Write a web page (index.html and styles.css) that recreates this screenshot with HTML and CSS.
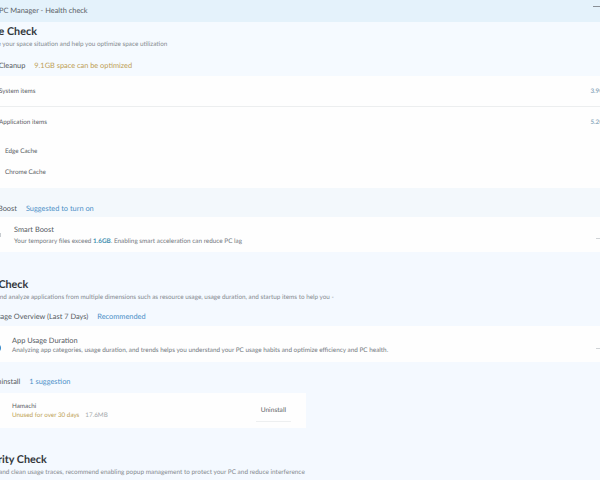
FILE: index.html
```html
<!DOCTYPE html>
<html lang="en">
<head>
<meta charset="utf-8">
<title>PC Manager - Health check</title>
<link rel="stylesheet" href="styles.css">
</head>
<body>
<div class="app">
  <header class="titlebar">
    <span class="app-name">PC Manager - Health check</span>
    <span class="minimize"></span>
  </header>

  <section class="top-block">
    <h2 class="title title-space">Space Check</h2>
    <p class="sub sub-space">Analyze your space situation and help you optimize space utilization</p>
    <div class="group-head head-cleanup"><span>Disk Cleanup</span><span class="warn">9.1GB space can be optimized</span></div>
  </section>

  <section class="panel">
    <div class="row row-system"><span>System items</span><b class="size">3.9GB</b></div>
    <div class="row row-app"><span>Application items</span><b class="size">5.2GB</b></div>
    <div class="cache cache-edge">Edge Cache</div>
    <div class="cache cache-chrome">Chrome Cache</div>
  </section>

  <div class="group-head band head-boost"><span>Smart Boost</span><span class="info">Suggested to turn on</span></div>
  <div class="card-wide boost-card">
    <span class="icon-stub"></span>
    <div>
      <div class="card-title">Smart Boost</div>
      <div class="card-text">Your temporary files exceed <b class="hl">1.6GB</b>. Enabling smart acceleration can reduce PC lag</div>
    </div>
    <span class="more"></span>
  </div>

  <section class="lower">
    <h2 class="title title-app">App Check</h2>
    <p class="sub sub-app">Detect and analyze applications from multiple dimensions such as resource usage, usage duration, and startup items to help you -</p>
    <div class="group-head head-usage"><span>App Usage Overview (Last 7 Days)</span><span class="info">Recommended</span></div>
    <div class="card-wide usage-card">
      <svg class="usage-icon" width="12" height="12" viewBox="0 0 12 12"><circle cx="6" cy="6" r="5" fill="#2f86c9"/></svg>
      <div>
        <div class="card-title">App Usage Duration</div>
        <div class="card-text usage-text">Analyzing app categories, usage duration, and trends helps you understand your PC usage habits and optimize efficiency and PC health.</div>
      </div>
      <span class="more"></span>
    </div>
    <div class="group-head head-uninstall"><span>Uninstall</span><span class="info">1 suggestion</span></div>
    <div class="app-card">
      <div class="app-info">
        <div class="app-title">Hamachi</div>
        <div class="app-meta"><span class="warn">Unused for over 30 days</span><span class="app-size">17.6MB</span></div>
      </div>
      <span class="uninstall">Uninstall</span>
    </div>
    <h2 class="title title-security">Security Check</h2>
    <p class="sub sub-security">Detect and clean usage traces, recommend enabling popup management to protect your PC and reduce interference</p>
  </section>
</div>
</body>
</html>
```
FILE: styles.css
```css
* { box-sizing: border-box; margin: 0; padding: 0; }
html, body { width: 600px; height: 480px; overflow: hidden; background: #f4f9ff; }
body { font-family: Lato, "Open Sans", sans-serif; color: #3a3f44; text-rendering: geometricPrecision; }
.app { width: 600px; height: 480px; overflow: hidden; }

.titlebar { height: 22px; background: #e4f2fb; display: flex; align-items: center; justify-content: space-between; }
.app-name { font-size: 7.4px; margin-left: -1px; color: #5a6066; margin-top: -1px; }
.minimize { width: 7px; height: 1px; background: #8a9096; margin-top: -9px; }

.top-block { height: 54px; background: #f5faff; display: flex; flex-direction: column; }
.title { font-size: 10.8px; font-weight: 700; color: #33373b; line-height: 14px; white-space: nowrap; }
.sub { font-size: 6.35px; color: #858a8f; line-height: 9px; white-space: nowrap; }
.title-space { margin: 3px 0 0 -24px; }
.sub-space { margin: 1px 0 0 -21px; }

.group-head { display: flex; gap: 9px; font-size: 7.4px; line-height: 11px; white-space: nowrap; color: #54595e; }
.warn { color: #bd9e55; }
.info { color: #4b8fc7; }
.head-cleanup { margin: 11px 0 0 -17.5px; }

.panel { height: 112px; background: #fefefe; display: flex; flex-direction: column; }
.row { display: flex; justify-content: space-between; font-size: 6.3px; line-height: 9px; color: #5b6065; white-space: nowrap; height: 31px; padding-top: 11px; margin-left: -1px; margin-right: -8px; }
.row-system { border-bottom: 1px solid #eceeef; }
.row-app { height: 29px; padding-top: 11px; }
.size { color: #8facc0; font-weight: 700; }
.cache { font-size: 6.3px; line-height: 9px; color: #5b6065; margin-left: 5px; }
.cache-edge { margin-top: 11px; }
.cache-chrome { margin-top: 12px; }

.band { height: 29px; background: #f3f8fc; align-items: center; margin-left: -23px; padding-top: 11px; }
.card-wide { height: 35px; background: #fefefe; display: flex; align-items: center; }
.boost-card { padding: 1px 0 0 14px; }
.icon-stub { width: 1px; height: 4px; margin-left: -14px; margin-right: 13px; background: #c8ccd0; }
.card-title { font-size: 7.4px; line-height: 10px; color: #55595e; }
.card-text { font-size: 6.38px; line-height: 9px; color: #74797e; margin-top: 2px; white-space: nowrap; }
.usage-text { margin-top: 0; }
.hl { color: #3f8fb0; font-weight: 700; }
.more { width: 4px; height: 1px; background: #cfd3d6; margin-left: auto; margin-top: 7px; }

.lower { display: flex; flex-direction: column; }
.title-app { margin: 26px 0 0 -24px; }
.sub-app { margin: 1px 0 0 -24px; }
.head-usage { margin: 9px 0 0 -23px; }
.usage-card { margin-top: 4px; height: 36px; padding-top: 2px; }
.usage-icon { flex: none; margin-left: -10px; margin-right: 10px; margin-top: 6px; }
.head-uninstall { margin: 14px 0 0 -8px; }
.app-card { width: 306px; height: 35px; margin-top: 6px; background: #fefefe; display: flex; align-items: center; justify-content: space-between; padding-left: 12px; padding-right: 15px; }
.app-info { padding-top: 1px; }
.app-title { font-size: 6.3px; line-height: 9px; color: #5b6065; }
.app-meta { font-size: 6.3px; line-height: 9px; display: flex; gap: 6px; }
.app-size { color: #a5a9ad; }
.uninstall { font-size: 6.6px; color: #5b6065; padding: 6px 5px 7px; border-bottom: 1px solid #edeff0; }
.title-security { margin: 25px 0 0 -25px; }
.sub-security { margin: 1px 0 0 -22px; font-size: 6.45px; }
```
